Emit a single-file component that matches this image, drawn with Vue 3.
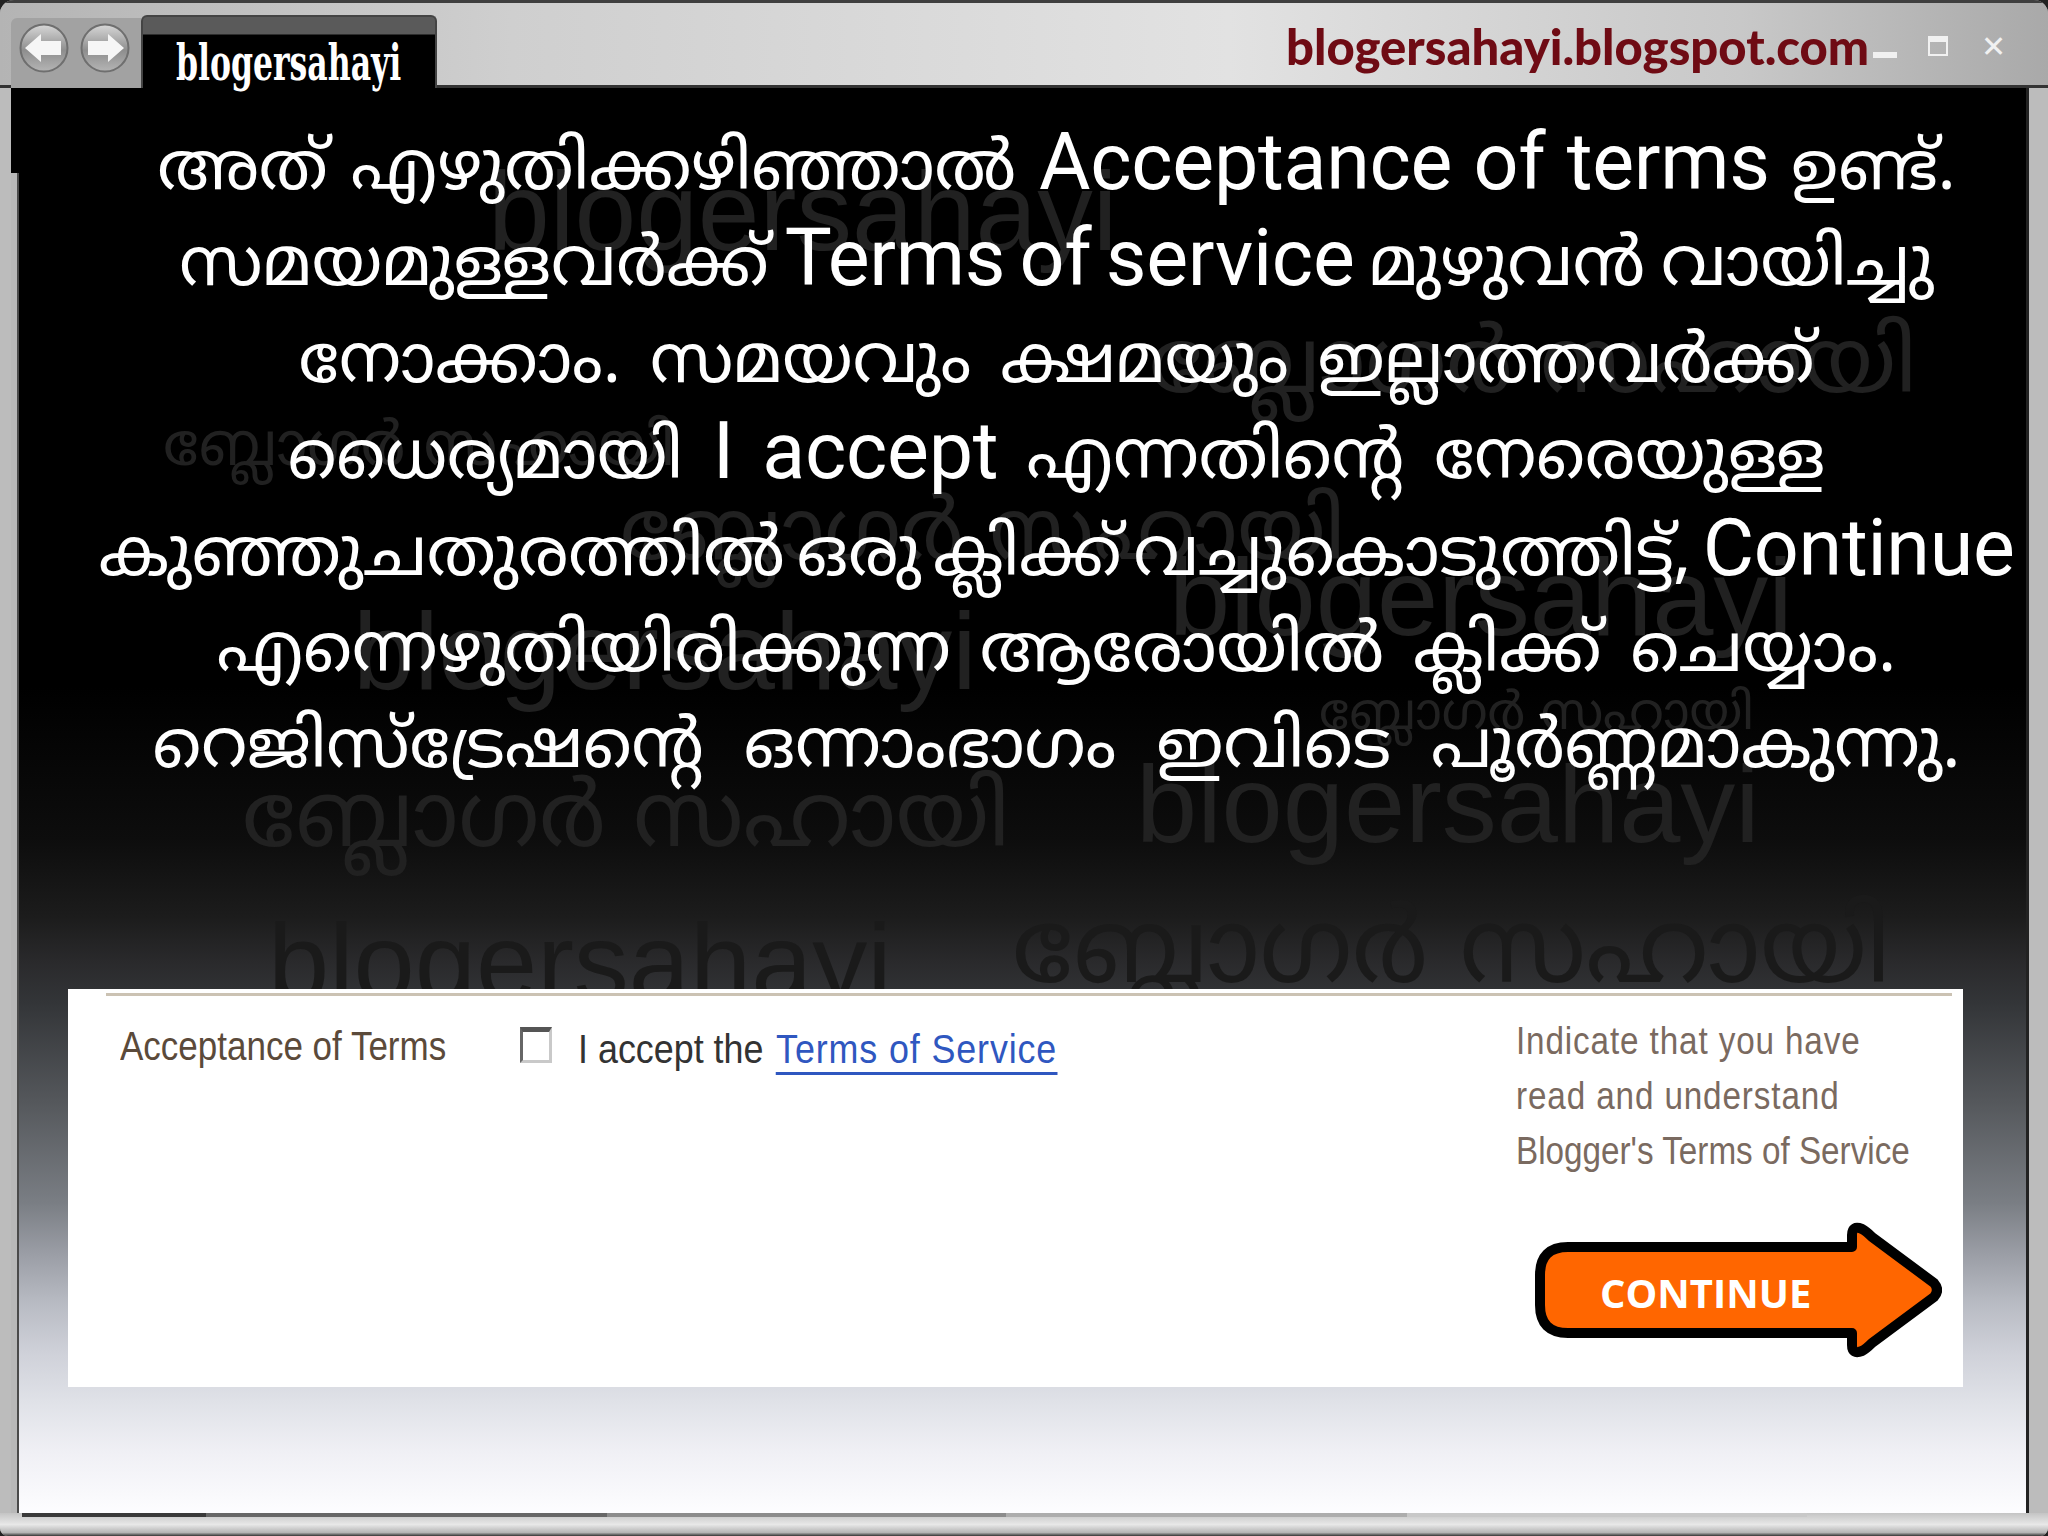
<script setup>
const lines = [
  'അത് എഴുതിക്കഴിഞ്ഞാൽ Acceptance of terms ഉണ്ട്.',
  'സമയമുള്ളവർക്ക് Terms of service മുഴുവൻ വായിച്ചു',
  'നോക്കാം. സമയവും ക്ഷമയും ഇല്ലാത്തവർക്ക്',
  'ധൈര്യമായി I accept എന്നതിന്റെ നേരെയുള്ള',
  'കുഞ്ഞുചതുരത്തിൽ ഒരു ക്ലിക്ക് വച്ചുകൊടുത്തിട്ട്, Continue',
  'എന്നെഴുതിയിരിക്കുന്ന ആരോയിൽ ക്ലിക്ക് ചെയ്യാം.',
  'റെജിസ്ട്രേഷന്റെ ഒന്നാംഭാഗം ഇവിടെ പൂർണ്ണമാകുന്നു.',
]
// gap between words per line, keeps each line as wide as in the original
const gaps = [2, -5, 8, 9, -9, 8, 19]

// odd parts are the latin runs, they get a larger size than the malayalam
const rows = lines.map((l) => l.split(/([A-Z][A-Za-z ]*)/))

const en = 'blogersahayi'
const ml = 'ബ്ലോഗർ സഹായി'
// faint words scattered behind the heading
const marks = [
  { text: en, x: 477, y: 69, size: 111 },
  { text: ml, x: 1138, y: 237, size: 90 },
  { text: ml, x: 152, y: 333, size: 60 },
  { text: ml, x: 609, y: 409, size: 85 },
  { text: en, x: 1158, y: 454, size: 110 },
  { text: en, x: 342, y: 508, size: 110 },
  { text: ml, x: 1308, y: 604, size: 51 },
  { text: ml, x: 231, y: 691, size: 90 },
  { text: en, x: 1125, y: 661, size: 110 },
  { text: en, x: 257, y: 819, size: 110, dark: true },
  { text: ml, x: 1001, y: 818, size: 103, dark: true },
]

const strip = [
  { width: 184, color: '#3a3a3a' },
  { width: 401, color: '#676767' },
  { width: 399, color: '#8c8c8c' },
  { width: 401, color: '#adadad' },
  { width: 400, color: '#c8c8c8' },
]
</script>

<template>
  <div class="window">
    <header class="titlebar">
      <div class="nav">
        <svg class="round" viewBox="0 0 50 50" width="50" height="50">
          <defs>
            <linearGradient id="ball" x1="0" y1="0" x2="0" y2="1">
              <stop offset="0" stop-color="#d8d8d8" />
              <stop offset="0.55" stop-color="#8e8e8e" />
              <stop offset="1" stop-color="#b5b5b5" />
            </linearGradient>
          </defs>
          <circle cx="25" cy="25" r="23.5" fill="url(#ball)" stroke="#6f6f6f" stroke-width="2" />
          <path d="M6 25 L22 11 V18 H42 V32 H22 V39 Z" fill="#f6f6f6" />
        </svg>
        <svg class="round" viewBox="0 0 50 50" width="50" height="50">
          <circle cx="25" cy="25" r="23.5" fill="url(#ball)" stroke="#6f6f6f" stroke-width="2" />
          <path d="M44 25 L28 11 V18 H8 V32 H28 V39 Z" fill="#f6f6f6" />
        </svg>
      </div>
      <div class="tab"><span class="tab-title">blogersahayi</span></div>
      <div class="site">blogersahayi.blogspot.com</div>
      <div class="controls">
        <span class="min"></span>
        <span class="max"></span>
        <span class="close">✕</span>
      </div>
    </header>

    <main class="page">
      <div class="edge"></div>
      <span
        v-for="(m, i) in marks"
        :key="i"
        class="mark"
        :class="{ dark: m.dark, latin: m.text === en }"
        :style="{ left: m.x + 'px', top: m.y + 'px', fontSize: m.size + 'px' }"
      >{{ m.text }}</span>

      <div class="message">
        <div
          v-for="(row, r) in rows"
          :key="r"
          class="line"
          :style="{ wordSpacing: gaps[r] + 'px' }"
        >
          <span v-for="(part, p) in row" :key="p" :class="{ en: p % 2 }">{{ part }}</span>
        </div>
      </div>

      <section class="card">
        <div class="rule"></div>
        <div class="row">
          <div class="label"><span class="narrow">Acceptance of Terms</span></div>
          <div class="accept">
            <span class="box"></span>
            <span class="narrow">I accept the <a class="link">Terms of Service</a></span>
          </div>
          <div class="side">
            <p class="help narrow">
              <span class="loose">Indicate that you have</span><br>
              <span class="loose">read and understand</span><br>
              Blogger's Terms of Service
            </p>
            <div class="continue">
              <svg viewBox="0 0 408 138" width="408" height="138">
                <path
                  d="M34 26 H318 V14 Q318 4 328 8 Q332 10 338 16 L400 62 Q406 69 400 76 L338 122 Q332 128 328 130 Q318 134 318 124 V112 H34 Q6 112 6 84 V54 Q6 26 34 26 Z"
                  fill="#ff6600"
                  stroke="#000"
                  stroke-width="10"
                  stroke-linejoin="round"
                />
              </svg>
              <span class="continue-text">CONTINUE</span>
            </div>
          </div>
        </div>
      </section>
    </main>

    <footer class="footer">
      <div class="strip">
        <span
          v-for="(s, i) in strip"
          :key="i"
          :style="{ width: s.width + 'px', background: s.color }"
        ></span>
      </div>
    </footer>
  </div>
</template>

<style scoped>
.window {
  width: 2048px;
  height: 1536px;
  display: flex;
  flex-direction: column;
  overflow: hidden;
  position: relative;
  background: #bcbcbc;
  border-radius: 14px 14px 8px 8px;
  font-family: "Noto Sans Malayalam", "Noto Sans", "Liberation Sans", sans-serif;
}

.titlebar {
  height: 88px;
  flex: none;
  display: flex;
  align-items: flex-start;
  box-sizing: border-box;
  border-top: 3px solid #3f3f3f;
  border-bottom: 3px solid #333;
  background: linear-gradient(90deg, #b4b4b4 0, #cfcfcf 25%, #e2e2e2 60%, #c8c8c8 85%, #a9a9a9 100%);
}
.nav {
  width: 130px;
  height: 70px;
  margin: 15px 0 0 11px;
  display: flex;
  align-items: center;
  gap: 11px;
  padding: 0 0 10px 8px;
  box-sizing: border-box;
  background: #a2a2a2;
  border-radius: 6px 0 0 0;
}
.round { flex: none; }
.tab {
  width: 296px;
  height: 73px;
  margin-top: 12px;
  box-sizing: border-box;
  border: 2px solid #444;
  border-bottom: 0;
  border-radius: 6px 6px 0 0;
  background: linear-gradient(#5a5a5a 0, #5a5a5a 17px, #000 18px);
  position: relative;
  z-index: 1;
}
.tab-title {
  display: block;
  width: max-content;
  margin: 18px 0 0 33px;
  color: #fff;
  font: bold 50px/56px "DejaVu Serif Condensed", "DejaVu Serif", serif;
  transform: scaleX(0.7);
  transform-origin: left;
}
.site {
  width: 579px;
  flex: none;
  margin: 13px 0 0 849px;
  color: #6f0b14;
  font: 900 49px/60px "Lato", "Liberation Sans", sans-serif;
  white-space: nowrap;
}
.controls {
  margin: 33px 0 0 8px;
  display: flex;
  align-items: flex-start;
  gap: 31px;
}
.min {
  width: 24px;
  height: 6px;
  margin-top: 16px;
  background: #f1f1f1;
}
.max {
  width: 20px;
  height: 20px;
  box-sizing: border-box;
  border: 2px solid #f1f1f1;
  border-top-width: 6px;
}
.close {
  margin-left: 2px;
  color: #f1f1f1;
  font: bold 30px/22px "DejaVu Sans", sans-serif;
}

.page {
  flex: 1;
  min-height: 0;
  position: relative;
  overflow: hidden;
  margin: 0 19px 0 11px;
  background: linear-gradient(#000 0, #000 600px, #0d0d0d 751px, #1c1c1c 829px, #2a2a2c 875px, #333538 915px, #55585c 1015px, #7a7e84 1115px, #9a9da5 1165px, #b8bbc3 1215px, #cfd1d9 1265px, #e0e2e8 1315px, #f0f0f5 1365px, #fdfdff 1425px);
  border-right: 3px solid #222;
}
.edge {
  position: absolute;
  left: 0;
  top: 85px;
  bottom: 0;
  width: 6px;
  background: #b8b8b8;
  border-right: 2px solid #4a4a4a;
}
.mark {
  position: absolute;
  color: #212121;
  font-family: "Noto Sans Malayalam", sans-serif;
  white-space: nowrap;
  line-height: 1;
}
.mark.latin { font-family: "Liberation Sans", sans-serif; }
.mark.dark { color: #1a1a1a; }
.message {
  position: relative;
  height: 901px;
  box-sizing: border-box;
  padding-top: 37px;
  margin-left: 76px;
}
.line {
  height: 96.4px;
  line-height: 96.4px;
  text-align: center;
  color: #fff;
  font-size: 68px;
  white-space: nowrap;
}
.en {
  font-family: "Roboto", "Liberation Sans", sans-serif;
  font-weight: 400;
  font-size: 79px;
  line-height: 0;
  letter-spacing: -0.3px;
}
.card {
  position: relative;
  width: 1895px;
  height: 398px;
  margin-left: 57px;
  box-sizing: border-box;
  padding-top: 4px;
  background: #fff;
}
.rule {
  height: 3px;
  margin: 0 11px 0 38px;
  background: #cbc2b3;
}
.row {
  display: flex;
  align-items: flex-start;
  padding: 27px 0 0 52px;
}
.narrow {
  display: inline-block;
  transform: scaleX(0.875);
  transform-origin: left;
  white-space: nowrap;
}
.label {
  width: 400px;
  flex: none;
  color: #5b4a3a;
  font: 40px/46px "Liberation Sans", sans-serif;
}
.accept {
  width: 996px;
  flex: none;
  display: flex;
  gap: 26px;
  color: #333;
  font: 41px/52px "Liberation Sans", sans-serif;
}
.box {
  width: 32px;
  height: 36px;
  flex: none;
  margin-top: 4px;
  box-sizing: border-box;
  border: 3px solid #c9c9c9;
  border-top: 5px solid #555;
  border-left-color: #666;
  background: #fff;
}
.link {
  margin-left: 3px;
  color: #2f57c0;
  letter-spacing: 1px;
  border-bottom: 3px solid #2f57c0;
}
.side {
  margin-top: -9px;
}
.help {
  margin: 0;
  color: #7a6a60;
  font: 38px/55px "Liberation Sans", sans-serif;
}
.loose { letter-spacing: 1px; }
.continue {
  position: relative;
  width: 408px;
  height: 138px;
  margin: 42px 0 0 18px;
}
.continue-text {
  position: absolute;
  left: 66px;
  top: 47px;
  color: #fff;
  font: bold 40px/50px "Open Sans", "Liberation Sans", sans-serif;
}

.footer {
  height: 23px;
  flex: none;
  box-sizing: border-box;
  padding-left: 22px;
  background: linear-gradient(#c4c4c4, #e8e8e8 50%, #b4b4b4 85%, #333 100%);
}
.strip {
  display: flex;
  height: 4px;
}
</style>

<style>
html, body { margin: 0; background: #222; }
</style>
